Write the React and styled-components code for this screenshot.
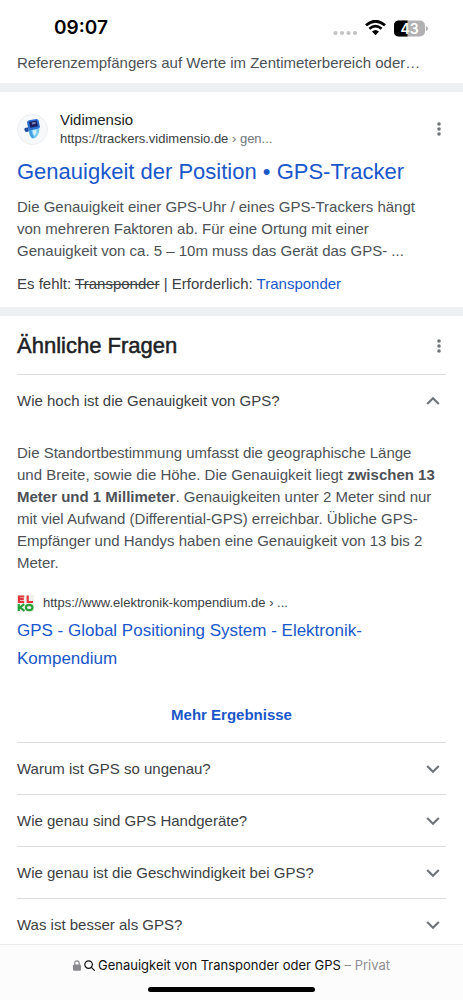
import React, { useState } from 'react';
import styled, { createGlobalStyle } from 'styled-components';

const GlobalStyle = createGlobalStyle`
  * {
    box-sizing: border-box;
  }

  body {
    margin: 0;
    background: #fff;
    color: #4d5156;
    font-family: "Liberation Sans", Arial, sans-serif;
    font-size: 15px;
    line-height: 22px;
  }

  button {
    font: inherit;
    color: inherit;
    background: none;
    border: 0;
    padding: 0;
    cursor: pointer;
  }
`;

const Screen = styled.div`
  display: flex;
  flex-direction: column;
  height: 100vh;
`;

const StatusBar = styled.header`
  display: flex;
  align-items: center;
  justify-content: space-between;
  flex-shrink: 0;
  padding: 16px 35px 12px 54px;
`;

const Clock = styled.time`
  color: #000;
  font-family: Inter, sans-serif;
  font-size: 19px;
  font-weight: 600;
  line-height: 24px;
`;

const StatusIcons = styled.div`
  display: flex;
  align-items: center;
  gap: 8px;
`;

const Results = styled.main`
  flex: 1;
  min-height: 0;
  overflow-y: auto;
  scrollbar-width: none;
`;

const Section = styled.section`
  padding: ${({ $pad }) => $pad};
  border-bottom: ${({ $last }) => ($last ? '0' : '9px solid #eff0f4')};
`;

const Text = styled.p`
  margin: 0;
  padding-right: 8px;
  color: #4d5156;
`;

const SiteRow = styled.div`
  display: flex;
  align-items: center;
  gap: 12px;
`;

const Favicon = styled.span`
  display: flex;
  align-items: center;
  justify-content: center;
  width: 31px;
  height: 31px;
  border: 1px solid #eceef1;
  border-radius: 50%;
  background: #f7f8fa;
`;

const SiteInfo = styled.div`
  flex: 1;
  min-width: 0;
`;

const SiteName = styled.div`
  color: #202124;
  line-height: 20px;
`;

const SiteUrl = styled.cite`
  display: block;
  color: #3c4043;
  font-size: 13px;
  font-style: normal;
  line-height: 18px;

  span {
    color: #70757a;
  }
`;

const IconButton = styled.button`
  display: flex;
  justify-content: center;
  width: 14px;
`;

const Link = styled.a`
  color: #1a57c9;
  text-decoration: none;
`;

const ResultTitle = styled.h3`
  margin: 10px 0;
  font-size: 22px;
  font-weight: 400;
  line-height: 28px;
`;

const Missing = styled.p`
  margin: 11px 0 0;
  color: #3c4043;
`;

const SectionHead = styled.div`
  display: flex;
  align-items: center;
  justify-content: space-between;
  padding-bottom: 14px;
`;

const SectionTitle = styled.h2`
  margin: 0;
  color: #202124;
  font-size: 22px;
  font-weight: 400;
  line-height: 28px;
  -webkit-text-stroke: 0.5px #202124;
`;

const Question = styled.div`
  border-top: 1px solid #dadce0;
`;

const QuestionButton = styled.button`
  display: flex;
  align-items: center;
  justify-content: space-between;
  width: 100%;
  min-height: 51px;
  padding-right: 6px;
  color: #3c4043;
  text-align: left;
`;

const Answer = styled.div`
  padding: 16px 0;
`;

const Source = styled.div`
  display: flex;
  align-items: center;
  gap: 9px;
  margin-top: 20px;
`;

const SourceTitle = styled.h3`
  margin: 5px 0 0;
  font-size: 17px;
  font-weight: 400;
  line-height: 28px;
`;

const MoreLink = styled(Link)`
  display: block;
  margin-top: 31px;
  font-weight: 700;
  text-align: center;
`;

const AddressBar = styled.footer`
  display: flex;
  flex-direction: column;
  align-items: center;
  flex-shrink: 0;
  gap: 12px;
  padding: 10px 0 8px;
  border-top: 1px solid #ebebed;
  background: #fcfcfc;
`;

const Address = styled.button`
  display: flex;
  align-items: center;
  gap: 3px;
  color: #111;
  font-family: Inter, sans-serif;
  font-size: 13px;
  line-height: 20px;
`;

const PrivateLabel = styled.span`
  color: #8e8e93;
`;

const HomeIndicator = styled.div`
  width: 36%;
  height: 5px;
  border-radius: 3px;
  background: #000;
`;

const SignalIcon = () => (
  <svg width="24" height="16" viewBox="0 0 24 16" fill="#c4c4c6" aria-hidden="true">
    <circle cx="2.5" cy="13" r="2.1" />
    <circle cx="9" cy="13" r="2.1" />
    <circle cx="15.5" cy="13" r="2.1" />
    <circle cx="22" cy="13" r="2.1" />
  </svg>
);

const WifiIcon = () => (
  <svg width="21" height="16" viewBox="0 0 21 16" fill="none" stroke="#000" aria-hidden="true">
    <path d="M1 5.2 Q10.5 -2.8 20 5.2" strokeWidth="2.8" />
    <path d="M4.4 8.7 Q10.5 3.6 16.6 8.7" strokeWidth="2.7" />
    <path d="M7 11.6 Q10.5 8.6 14 11.6 L10.5 15.2 Z" fill="#000" stroke="none" />
  </svg>
);

const BatteryIcon = () => (
  <svg width="34" height="17" viewBox="0 0 34 17" role="img" aria-label="43 Prozent">
    <rect width="31" height="16" y="0.5" rx="5" fill="#b1b1b3" />
    <path d="M5 .5 H13.5 V16.5 H5 Q0 16.5 0 11.5 V5.5 Q0 .5 5 .5Z" fill="#000" />
    <path d="M32 6 Q34 6.5 34 8.5 Q34 10.5 32 11Z" fill="#b1b1b3" />
    <text x="15.5" y="13.5" textAnchor="middle" fill="#fff" fontFamily="Inter, sans-serif" fontSize="14" fontWeight="600">43</text>
  </svg>
);

const WatchIcon = () => (
  <svg width="19" height="22" viewBox="0 0 19 22" aria-hidden="true">
    <path d="M5.5 10.5 L16.5 8.5 Q16.8 14 14.5 17.5 Q12.5 20.8 9.5 20.4 Q7.5 19.5 6.3 16.5Z" fill="#74cbf2" />
    <path d="M9.5 12.5 L13.5 11.5 Q13.8 15 11.5 18 Q10.3 16 9.5 12.5Z" fill="#d9f1fb" />
    <path d="M6 12 L8.2 12 Q9 16.5 11 19.5 L9.3 20.3 Q7 18.5 6 12Z" fill="#3f9fe0" />
    <path d="M4 4.3 Q4.4 2.5 6 2.2 L13.3 1 Q15.2 .9 15.6 2.6 L16.9 8.4 Q17 10 15.4 10.5 L7.5 12.2 Q5.6 12.3 5.2 10.5Z" fill="#2d6fd0" />
    <path d="M6 3.9 L13.6 2.6 L15 8.2 L7.4 9.8Z" fill="#1a2060" />
    <path d="M8.7 4.6 L12.4 4 L12.9 5.8 L9.2 6.5Z" fill="#7f8bb4" />
    <path d="M1.3 11 Q1.6 10 2.6 9.8 L5 9.4 L6 13.2 L3.6 14 Q2.2 14 1.8 12.8Z" fill="#1c4c9e" />
  </svg>
);

const ElkoIcon = () => (
  <svg width="17" height="17" viewBox="0 0 17 17" aria-hidden="true">
    <rect width="17" height="17" fill="#f1f1ee" />
    <g fill="none" strokeWidth="2.2">
      <path d="M7.2 1.5 H2 V7 H7.2 M2 4.2 H6.8 M10.7 .5 V7 H16" stroke="#e0353b" />
      <path d="M1.8 9 V16 M7.2 9.2 L3 12.5 L7.5 15.8" stroke="#28a23a" />
      <ellipse cx="12.2" cy="12.5" rx="3.3" ry="2.6" stroke="#28a23a" />
    </g>
  </svg>
);

const MoreIcon = () => (
  <svg width="6" height="16" viewBox="0 0 6 16" fill="#70757a" aria-hidden="true">
    <circle cx="3" cy="3" r="1.8" />
    <circle cx="3" cy="8" r="1.8" />
    <circle cx="3" cy="13" r="1.8" />
  </svg>
);

const Chevron = ({ up }) => (
  <svg width="14" height="10" viewBox="0 0 14 10" fill="none" stroke="#70757a" strokeWidth="2.2" aria-hidden="true">
    <path d={up ? 'M1.2 8 L7 2.2 L12.8 8' : 'M1.2 2 L7 7.8 L12.8 2'} />
  </svg>
);

const LockIcon = () => (
  <svg width="8" height="11" viewBox="0 0 8 11" aria-hidden="true">
    <rect y="4.5" width="8" height="6.2" rx="1.2" fill="#8a8a8e" />
    <path d="M1.8 5 V3 Q1.8 .8 4 .8 Q6.2 .8 6.2 3 V5" fill="none" stroke="#8a8a8e" strokeWidth="1.2" />
  </svg>
);

const SearchIcon = () => (
  <svg width="11" height="11" viewBox="0 0 11 11" fill="none" stroke="#111" strokeWidth="1.2" aria-hidden="true">
    <circle cx="4.6" cy="4.6" r="3.8" />
    <path d="M7.3 7.3 L10.4 10.4" strokeLinecap="round" />
  </svg>
);

const questions = [
  'Wie hoch ist die Genauigkeit von GPS?',
  'Warum ist GPS so ungenau?',
  'Wie genau sind GPS Handgeräte?',
  'Wie genau ist die Geschwindigkeit bei GPS?',
  'Was ist besser als GPS?',
];

const AccuracyAnswer = () => (
  <Answer>
    <Text>
      Die Standortbestimmung umfasst die geographische Länge und Breite, sowie die Höhe. Die
      Genauigkeit liegt <b>zwischen 13 Meter und 1 Millimeter</b>. Genauigkeiten unter 2 Meter
      sind nur mit viel Aufwand (Differential-GPS) erreichbar. Übliche GPS-Empfänger und Handys
      haben eine Genauigkeit von 13 bis 2 Meter.
    </Text>
    <Source>
      <ElkoIcon />
      <SiteUrl>https://www.elektronik-kompendium.de › ...</SiteUrl>
    </Source>
    <SourceTitle>
      <Link href="#kompendium">GPS - Global Positioning System - Elektronik-Kompendium</Link>
    </SourceTitle>
    <MoreLink href="#mehr">Mehr Ergebnisse</MoreLink>
  </Answer>
);

const App = () => {
  const [open, setOpen] = useState(0);

  return (
    <Screen>
      <GlobalStyle />
      <StatusBar>
        <Clock>09:07</Clock>
        <StatusIcons>
          <SignalIcon />
          <WifiIcon />
          <BatteryIcon />
        </StatusIcons>
      </StatusBar>

      <Results>
        <Section $pad="0 17px 9px">
          <Text>Referenzempfängers auf Werte im Zentimeterbereich oder…</Text>
        </Section>

        <Section $pad="18px 17px 12px">
          <SiteRow>
            <Favicon><WatchIcon /></Favicon>
            <SiteInfo>
              <SiteName>Vidimensio</SiteName>
              <SiteUrl>https://trackers.vidimensio.de <span>› gen...</span></SiteUrl>
            </SiteInfo>
            <IconButton aria-label="Mehr zu diesem Ergebnis"><MoreIcon /></IconButton>
          </SiteRow>
          <ResultTitle>
            <Link href="#tracker">Genauigkeit der Position • GPS-Tracker</Link>
          </ResultTitle>
          <Text>
            Die Genauigkeit einer GPS-Uhr / eines GPS-Trackers hängt von mehreren Faktoren ab. Für
            eine Ortung mit einer Genauigkeit von ca. 5 – 10m muss das Gerät das GPS- ...
          </Text>
          <Missing>
            Es fehlt: <s>Transponder</s> | Erforderlich: <Link href="#transponder">Transponder</Link>
          </Missing>
        </Section>

        <Section $pad="16px 17px 0" $last>
          <SectionHead>
            <SectionTitle>Ähnliche Fragen</SectionTitle>
            <IconButton aria-label="Mehr zu ähnlichen Fragen"><MoreIcon /></IconButton>
          </SectionHead>
          {questions.map((question, i) => (
            <Question key={question}>
              <QuestionButton
                aria-expanded={open === i}
                onClick={() => setOpen(open === i ? -1 : i)}
              >
                {question}
                <Chevron up={open === i} />
              </QuestionButton>
              {i === 0 && open === 0 && <AccuracyAnswer />}
            </Question>
          ))}
        </Section>
      </Results>

      <AddressBar>
        <Address>
          <LockIcon />
          <SearchIcon />
          <span>
            Genauigkeit von Transponder oder GPS <PrivateLabel>– Privat</PrivateLabel>
          </span>
        </Address>
        <HomeIndicator />
      </AddressBar>
    </Screen>
  );
};

export default App;
